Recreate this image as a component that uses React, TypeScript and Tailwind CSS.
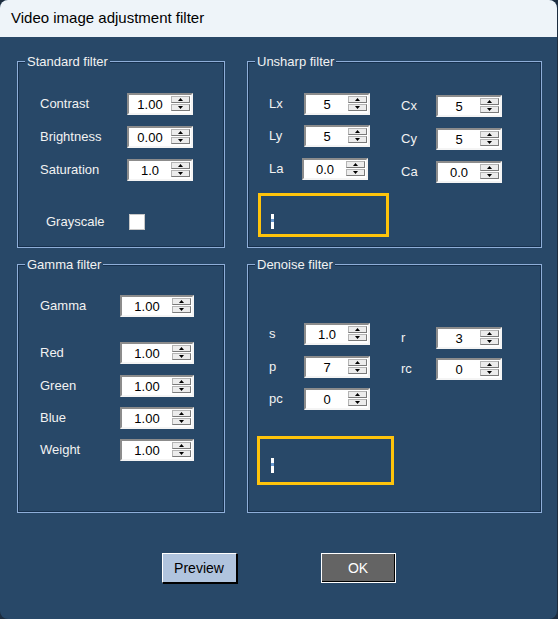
import React from 'react';

const font = { fontFamily: '"Liberation Sans", Arial, sans-serif' };

function Arrow({ up }: { up?: boolean }) {
  return (
    <svg width="5" height="3" viewBox="0 0 5 3" className="block">
      {up ? <path d="M2.5 0 L5 3 L0 3 Z" fill="#000" /> : <path d="M0 0 L5 0 L2.5 3 Z" fill="#000" />}
    </svg>
  );
}

function Spinner({ value, wide }: { value: string; wide?: boolean }) {
  return (
    <div
      className={`flex h-[22px] bg-white border-2 border-t-[#8c8c8c] border-l-[#8c8c8c] border-r-[#f4f4f4] border-b-[#f4f4f4] ${
        wide ? 'w-[74px]' : 'w-[66px]'
      }`}
    >
      <div className="flex-1 text-center text-[13px] leading-[19px] text-black">{value}</div>
      <div className="flex flex-col gap-[1px] w-[20px] pt-[1px] pr-[1px]">
        <div className="flex h-[7px] items-center justify-center bg-[#ececec] border border-[#b4b4b4] border-b-[#7a7a7a] border-r-[#7a7a7a]">
          <Arrow up />
        </div>
        <div className="flex h-[7px] items-center justify-center bg-[#ececec] border border-[#b4b4b4] border-b-[#7a7a7a] border-r-[#7a7a7a]">
          <Arrow />
        </div>
      </div>
    </div>
  );
}

function Field({ label, value, labelW, wide, className = '' }: { label: string; value: string; labelW: string; wide?: boolean; className?: string }) {
  return (
    <div className={`flex items-center h-[22px] ${className}`}>
      <span className={`${labelW} text-[13px] text-[#f2f2f2] leading-none mt-[-2px]`}>{label}</span>
      <Spinner value={value} wide={wide} />
    </div>
  );
}

function Group({ title, className, children }: { title: string; className: string; children: React.ReactNode }) {
  return (
    <div className={`relative border border-[#8eaed8] shadow-[inset_0_0_0_1px_#16304d] ${className}`}>
      <span className="absolute top-[-8px] left-[7px] px-[2px] bg-[#284868] text-[13px] leading-[15px] text-[#f2f2f2]">
        {title}
      </span>
      {children}
    </div>
  );
}

function Caret() {
  return (
    <div className="flex flex-col w-[3px] h-[15px] bg-white">
      <div className="h-[5px]" />
      <div className="h-[3px] bg-[#6a9ad0]" />
    </div>
  );
}

export default function App() {
  return (
    <div className="w-[558px] h-[619px] bg-[#1d2d3f]" style={font}>
      <div className="flex flex-col w-[557px] h-[619px] rounded-[8px] overflow-hidden bg-[#284868]">
        {/* title bar */}
        <div className="h-[37px] bg-[#eef4f9] flex items-center pl-[11px]">
          <span className="text-[15px] text-black">Video image adjustment filter</span>
        </div>

        <div className="flex flex-col pt-[24px] pl-[17px]">
          {/* top row */}
          <div className="flex gap-[22px]">
            <Group title="Standard filter" className="w-[208px] h-[187px]">
              <div className="flex flex-col gap-[11px] pt-[31px] pl-[22px]">
                <Field label="Contrast" value="1.00" labelW="w-[87px]" />
                <Field label="Brightness" value="0.00" labelW="w-[87px]" />
                <Field label="Saturation" value="1.0" labelW="w-[87px]" />
                <div className="flex items-center h-[22px] mt-[19px] pl-[6px]">
                  <span className="w-[83px] text-[13px] text-[#f2f2f2]">Grayscale</span>
                  <div className="w-[16px] h-[16px] bg-white border border-[#c8c8c8]" />
                </div>
              </div>
            </Group>

            <Group title="Unsharp filter" className="w-[295px] h-[187px]">
              <div className="flex flex-col pt-[31px] pl-[10px]">
                <div className="flex items-start gap-[31px] ml-[11px]">
                  <div className="flex flex-col gap-[10px]">
                    <Field label="Lx" value="5" labelW="w-[35px]" />
                    <Field label="Ly" value="5" labelW="w-[35px]" />
                    <Field label="La" value="0.0" labelW="w-[33px]" className="mt-[1px]" />
                  </div>
                  <div className="flex flex-col gap-[11px] mt-[2px]">
                    <Field label="Cx" value="5" labelW="w-[35px]" />
                    <Field label="Cy" value="5" labelW="w-[35px]" />
                    <Field label="Ca" value="0.0" labelW="w-[35px]" />
                  </div>
                </div>
                <div className="mt-[10px] w-[131px] h-[44px] border-[3px] border-[#ffc40c] pl-[10px] pt-[18px]">
                  <Caret />
                </div>
              </div>
            </Group>
          </div>

          {/* bottom row */}
          <div className="flex gap-[22px] mt-[16px]">
            <Group title="Gamma filter" className="w-[208px] h-[249px]">
              <div className="flex flex-col gap-[10px] pt-[30px] pl-[22px]">
                <Field label="Gamma" value="1.00" labelW="w-[80px]" wide />
                <Field label="Red" value="1.00" labelW="w-[80px]" wide className="mt-[15px]" />
                <Field label="Green" value="1.00" labelW="w-[80px]" wide className="mt-[1px]" />
                <Field label="Blue" value="1.00" labelW="w-[80px]" wide />
                <Field label="Weight" value="1.00" labelW="w-[80px]" wide />
              </div>
            </Group>

            <Group title="Denoise filter" className="w-[295px] h-[249px]">
              <div className="flex flex-col pt-[58px] pl-[9px]">
                <div className="flex items-start gap-[31px] ml-[12px]">
                  <div className="flex flex-col gap-[10px]">
                    <Field label="s" value="1.0" labelW="w-[35px]" />
                    <Field label="p" value="7" labelW="w-[35px]" className="mt-[1px]" />
                    <Field label="pc" value="0" labelW="w-[35px]" />
                  </div>
                  <div className="flex flex-col gap-[9px] mt-[4px]">
                    <Field label="r" value="3" labelW="w-[35px]" />
                    <Field label="rc" value="0" labelW="w-[35px]" />
                  </div>
                </div>
                <div className="mt-[26px] w-[137px] h-[49px] border-[3px] border-[#ffc40c] pl-[11px] pt-[19px]">
                  <Caret />
                </div>
              </div>
            </Group>
          </div>

          {/* buttons */}
          <div className="flex justify-center gap-[84px] mt-[40px] pr-[17px]">
            <button className="w-[75px] h-[30px] bg-[#b0c4de] border border-t-white border-l-white border-r-black border-b-black shadow-[1px_1px_0_#000] text-[14px] text-black">
              Preview
            </button>
            <button className="w-[75px] h-[30px] bg-[#646464] border border-white shadow-[inset_-1px_-1px_0_#000] text-[14px] text-white">
              OK
            </button>
          </div>
        </div>
      </div>
    </div>
  );
}
